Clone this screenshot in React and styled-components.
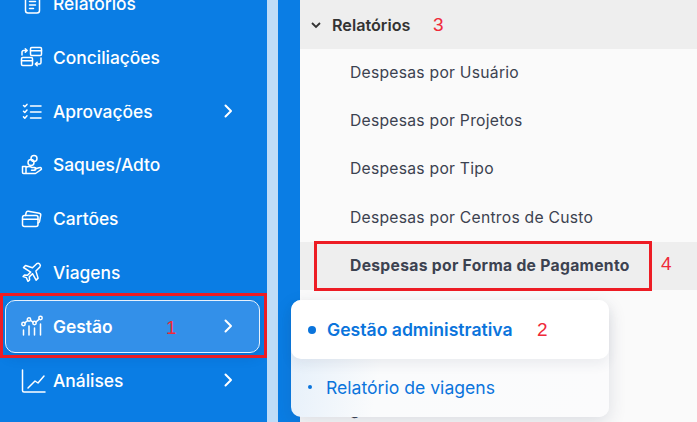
import React from "react";
import styled, { createGlobalStyle } from "styled-components";

const Global = createGlobalStyle`
  html, body { margin: 0; padding: 0; }
  body { font-family: Inter, "Noto Sans", sans-serif; overflow: hidden; }
`;

const Page = styled.div`
  position: relative;
  width: 697px;
  height: 422px;
  overflow: hidden;
  display: flex;
  background: #0a7de4;
`;
const Sidebar = styled.nav`
  width: 267px;
  height: 422px;
  flex: none;
  overflow: hidden;
  background: #0a7de4;
  padding: 5px 6px 0 5px;
  box-sizing: border-box;
`;
const SideList = styled.ul`
  list-style: none;
  margin: -28px 0 0;
  padding: 0;
  display: flex;
  flex-direction: column;
  gap: 0.8px;
`;
const SideItem = styled.li`
  height: 53px;
  box-sizing: border-box;
  display: flex;
  align-items: center;
  margin-right: ${(p) => (p.$active ? "1px" : "0")};
  padding: 0 ${(p) => (p.$active ? "24px" : "26px")} 0 ${(p) => (p.$active ? "15px" : "16px")};
  color: #fff;
  font-size: 17.4px;
  font-weight: 500;
  border-radius: 10px;
  border: ${(p) => (p.$active ? "1px solid #e6f1fc" : "none")};
  background: ${(p) => (p.$active ? "#3390e9" : "transparent")};
  box-shadow: ${(p) => (p.$active ? "0 4px 12px rgba(0,50,120,.18)" : "none")};
`;
const SideIcon = styled.svg`
  width: 22px;
  height: 22px;
  flex: none;
  margin-right: 10px;
  overflow: visible;
  fill: none;
  stroke: #fff;
  stroke-width: 1.5;
  stroke-linecap: round;
  stroke-linejoin: round;
`;
const SideLabel = styled.span`
  flex: 1;
  font-weight: ${(p) => (p.$active ? 600 : 500)};
`;
const Chevron = styled.svg`
  width: 14px;
  height: 14px;
  flex: none;
  fill: none;
  stroke: #fff;
  stroke-width: 2;
  stroke-linecap: round;
  stroke-linejoin: round;
`;
const Divider = styled.div`
  width: 11px;
  flex: none;
  background: #bfdcf7;
`;
const Rail = styled.div`
  width: 22px;
  flex: none;
  background: #0a7de4;
`;
const Content = styled.main`
  flex: 1;
  background: #fafafa;
  display: flex;
  flex-direction: column;
`;
const SectionHead = styled.div`
  height: 49px;
  flex: none;
  background: #eeeeee;
  display: flex;
  align-items: center;
  padding-left: 10px;
  color: #333;
  font-size: 16.2px;
  font-weight: 600;
  gap: 10px;
`;
const SubItem = styled.div`
  height: 48.2px;
  flex: none;
  box-sizing: border-box;
  display: flex;
  align-items: center;
  padding-left: 50px;
  padding-bottom: 1px;
  color: #3c4250;
  font-size: 15.7px;
  letter-spacing: ${(p) => (p.$active ? "0.3px" : "0.25px")};
  background: ${(p) => (p.$active ? "#eeeeee" : "transparent")};
  font-weight: ${(p) => (p.$active ? 700 : 400)};
`;
const HiddenItem = styled(SubItem)`
  margin-top: 96px;
`;
const Note = styled.span`
  position: absolute;
  color: #ef2a39;
  font-family: "Liberation Sans", Arial, sans-serif;
  font-size: 19px;
  line-height: 20px;
`;
const RedBox = styled.div`
  position: absolute;
  box-sizing: border-box;
  border: 3px solid #ed1c24;
`;
const Popup = styled.div`
  position: absolute;
  left: 291px;
  top: 300px;
  width: 318px;
  height: 117px;
  border-radius: 10px;
  background: linear-gradient(100deg, #e4effa 0%, #fafbfc 30%, #fbfbfc 100%);
  box-shadow: 0 6px 18px rgba(40, 60, 90, 0.14);
`;
const PopRow = styled.div`
  height: ${(p) => (p.$active ? "59px" : "58px")};
  box-sizing: border-box;
  display: flex;
  align-items: center;
  color: #0a74dc;
  border-radius: 10px;
  padding-left: 17px;
  padding-bottom: ${(p) => (p.$active ? "0" : "2px")};
  font-size: 17.6px;
  font-weight: ${(p) => (p.$active ? 600 : 400)};
  background: ${(p) => (p.$active ? "#fff" : "transparent")};
  box-shadow: ${(p) => (p.$active ? "0 6px 12px rgba(40,60,90,.07)" : "none")};
`;
const Dot = styled.i`
  display: block;
  width: ${(p) => p.$size}px;
  height: ${(p) => p.$size}px;
  border-radius: 50%;
  background: #0a74dc;
  margin-right: ${(p) => p.$gap}px;
  flex: none;
`;

const icons = {
  rel: <><rect x="4.5" y="3" width="14" height="17" rx="2.5" /><path d="M8.5 3V2h6v1M8.5 8.5h6M8.5 12h6M8.5 15.5h4" /></>,
  con: <><rect x="9.5" y="1.5" width="11" height="8" rx="1.2" /><path d="M9.5 4.8h11" /><rect x="0.5" y="11.5" width="11" height="8" rx="1.2" /><path d="M0.5 14.8h11M1 9V6a1.5 1.5 0 0 1 1.5-1.5H6M4.3 2.7 6.2 4.5 4.3 6.3M20 12v4.5a1.5 1.5 0 0 1-1.5 1.5H14.5M16.2 16.2 14.3 18l1.9 1.8" /></>,
  apr: <><path d="M2.5 5.5l1.3 1.3 2.2-2.4M2.5 11.2l1.3 1.3L6 10.1M2.5 16.9l1.3 1.3L6 15.8M9.5 6h10.500M9.5 12h10.500M9.5 18h10.500" /></>,
  saq: <><circle cx="13" cy="4.5" r="3" /><circle cx="10" cy="8.5" r="3" /><path d="M1.5 12.5h3.5v7H2.500a1 1 0 0 1-1-1zM5 13.5c2-1.500 4-1.300 6 0h2.500a1.400 1.400 0 0 1 0 2.800h-3M14 15l4.700-1.500a1.300 1.300 0 0 1 1.300 2.200L14.500 19.500H5" /></>,
  car: <><rect x="1.500" y="7.500" width="15.500" height="11" rx="2" /><path d="M1.500 11.300h15.500M4.500 7.500l.7-3a1.800 1.800 0 0 1 2.100-1.300l11 2a1.800 1.800 0 0 1 1.400 2.100l-1.200 6.400a1.800 1.800 0 0 1-1.500 1.400" /></>,
  via: <path d="M2.500 6.500 4.500 4.500l7 2.200 4.200-4a2.300 2.300 0 0 1 3.200 3.200l-4 4.200 2.200 7-2 2-3.600-6.400-3.200 3.200.3 3-1.700 1.400-1.600-3.700L2.100 15.600 3.500 14l3 .3 3.200-3.200z" />,
  ges: <><circle cx="2.500" cy="9" r="1.700" /><circle cx="8" cy="4.500" r="1.700" /><circle cx="13.500" cy="8" r="1.700" /><circle cx="19.500" cy="3" r="1.700" /><path d="M3.800 7.800 6.700 5.500M9.500 5.300l2.500 1.800M15 7l3.200-2.900M2.500 15v5M8 11v9M13.500 13v7M19.500 9v11" /></>,
  ana: <path d="M1.500 1v20.500a1.500 1.500 0 0 0 1.500 1.500h21M7 19l7-7 3 2 6-7" />,
};
const items = [
  ["rel", "Relatórios"],
  ["con", "Conciliações"],
  ["apr", "Aprovações", true],
  ["saq", "Saques/Adto"],
  ["car", "Cartões"],
  ["via", "Viagens"],
  ["ges", "Gestão", true, true],
  ["ana", "Análises", true],
];

export default function App() {
  return (
    <Page>
      <Global />
      <Sidebar>
        <SideList>
          {items.map(([k, label, chev, active]) => (
            <SideItem key={k} $active={active}>
              <SideIcon viewBox="0 0 22 22">{icons[k]}</SideIcon>
              <SideLabel $active={active}>{label}</SideLabel>
              {chev && <Chevron viewBox="0 0 14 14"><path d="M4.500 1.500 10 7l-5.500 5.500" /></Chevron>}
            </SideItem>
          ))}
        </SideList>
      </Sidebar>
      <Divider />
      <Rail />
      <Content>
        <SectionHead>
          <svg width="12" height="12" viewBox="0 0 12 12" fill="none" stroke="#333" strokeWidth="1.8"><path d="M2 4l4 4 4-4" /></svg>
          Relatórios
        </SectionHead>
        <SubItem>Despesas por Usuário</SubItem>
        <SubItem>Despesas por Projetos</SubItem>
        <SubItem>Despesas por Tipo</SubItem>
        <SubItem>Despesas por Centros de Custo</SubItem>
        <SubItem $active>Despesas por Forma de Pagamento</SubItem>
        <HiddenItem>g</HiddenItem>
      </Content>
      <Popup>
        <PopRow $active><Dot $size={8} $gap={11} />Gestão administrativa</PopRow>
        <PopRow><Dot $size={4} $gap={14} />Relatório de viagens</PopRow>
      </Popup>
      <RedBox style={{ left: 0, top: 293, width: 267, height: 65 }} />
      <RedBox style={{ left: 314, top: 241, width: 338, height: 50 }} />
      <Note style={{ left: 166, top: 318 }}>1</Note>
      <Note style={{ left: 537, top: 320 }}>2</Note>
      <Note style={{ left: 433, top: 15 }}>3</Note>
      <Note style={{ left: 661, top: 254 }}>4</Note>
    </Page>
  );
}
